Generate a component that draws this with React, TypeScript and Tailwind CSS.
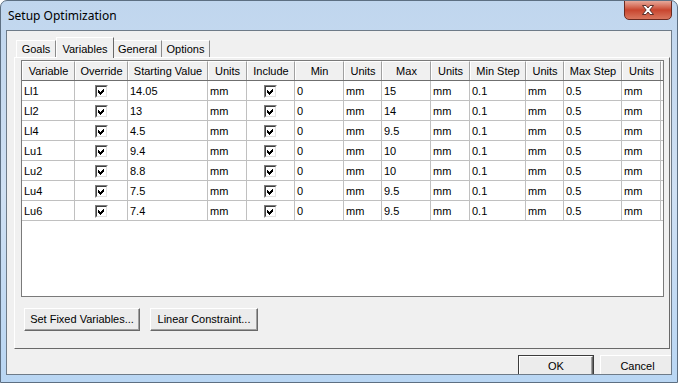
import React from "react";

const cols = [
  { h: "Variable", w: "w-[53px]" },
  { h: "Override", w: "w-[53px]" },
  { h: "Starting Value", w: "w-[80px]" },
  { h: "Units", w: "w-[39px]" },
  { h: "Include", w: "w-[48px]" },
  { h: "Min", w: "w-[49px]" },
  { h: "Units", w: "w-[38px]" },
  { h: "Max", w: "w-[49px]" },
  { h: "Units", w: "w-[39px]" },
  { h: "Min Step", w: "w-[56px]" },
  { h: "Units", w: "w-[38px]" },
  { h: "Max Step", w: "w-[58px]" },
  { h: "Units", w: "w-[39px]" },
];

const rows = [
  ["Ll1", "14.05", "15"],
  ["Ll2", "13", "14"],
  ["Ll4", "4.5", "9.5"],
  ["Lu1", "9.4", "10"],
  ["Lu2", "8.8", "10"],
  ["Lu4", "7.5", "9.5"],
  ["Lu6", "7.4", "9.5"],
];

function Check() {
  return (
    <div className="w-[13px] h-[13px] border border-t-[#808080] border-l-[#808080] border-b-white border-r-white">
      <div className="w-[11px] h-[11px] border border-t-[#404040] border-l-[#404040] border-b-[#e3e3e3] border-r-[#e3e3e3] bg-white flex items-center justify-center">
        <svg width="9" height="9" viewBox="0 0 9 9" shapeRendering="crispEdges">
          <path d="M1 3 L3 5 L7 1 L7 4 L3 8 L1 6 Z" fill="#000" />
        </svg>
      </div>
    </div>
  );
}

function Btn({ children, w, def }: { children: React.ReactNode; w: string; def?: boolean }) {
  return (
    <div className={`${w} h-[23px] ${def ? "border border-[#3c3c3c]" : ""} shrink-0`}>
      <div className="w-full h-full bg-[#ececec] border border-t-white border-l-white border-b-[#696969] border-r-[#696969] shadow-[inset_-1px_-1px_0_#a0a0a0] flex items-center justify-center text-[11px] text-black">
        {children}
      </div>
    </div>
  );
}

export default function App() {
  return (
    <div
      className="w-[678px] h-[383px] flex flex-col rounded-t-[7px] border border-[#5d6f82] bg-gradient-to-b from-[#c0d6ee] via-[#cfe0f3] to-[#b9d6f3] overflow-hidden"
      style={{ fontFamily: '"Liberation Sans", Arial, sans-serif' }}
    >
      {/* Title bar */}
      <div className="h-[29px] shrink-0 flex items-start relative">
        <div
          className="pl-[7px] pt-[6px] text-[12px] text-black"
          style={{ fontFamily: '"Noto Sans", sans-serif' }}
        >
          Setup Optimization
        </div>
        <div className="absolute right-[5px] top-[-1px] w-[48px] h-[20px] rounded-b-[5px] border border-[#6b2a20] bg-gradient-to-b from-[#e6a89a] via-[#c8452e] to-[#d9765e] flex items-center justify-center">
          <svg width="14" height="12" viewBox="0 0 14 12">
            <path
              d="M1.5 1.5 L5 1.5 L7 4 L9 1.5 L12.5 1.5 L8.8 6 L12.5 10.5 L9 10.5 L7 8 L5 10.5 L1.5 10.5 L5.2 6 Z"
              fill="#fff"
              stroke="#4a2420"
              strokeWidth="0.9"
              strokeLinejoin="round"
            />
          </svg>
        </div>
      </div>

      {/* Client */}
      <div className="flex-1 px-[5px] flex min-h-0">
        <div className="flex-1 border border-[#6e7b88] bg-[#f0f0f0] overflow-hidden pl-[7px] pt-[6px]">
          {/* Tabs */}
          <div className="h-[20px] flex items-end pl-[2px] relative z-10 text-[11px] text-black">
            <div className="w-[40px] h-[17px] bg-[#f0f0f0] border-l border-t border-l-white border-t-white border-r border-r-[#8a8a8a] flex items-center justify-center pt-[1px]">
              Goals
            </div>
            <div className="w-[58px] h-[21px] mb-[-1px] bg-[#f0f0f0] border-l border-t border-l-white border-t-white border-r border-r-[#696969] flex items-start justify-center pt-[3px]">
              Variables
            </div>
            <div className="w-[48px] h-[17px] bg-[#f0f0f0] border-t border-t-white border-r border-r-[#8a8a8a] flex items-center justify-center pt-[1px]">
              General
            </div>
            <div className="w-[48px] h-[17px] bg-[#f0f0f0] border-t border-t-white border-r border-r-[#8a8a8a] flex items-center justify-center pt-[1px]">
              Options
            </div>
          </div>

          {/* Panel */}
          <div className="w-[656px] h-[292px] border border-t-white border-l-white border-b-[#696969] border-r-[#696969] pl-[6px] pt-[2px] flex flex-col">
            {/* Grid */}
            <div className="w-[643px] h-[237px] border border-[#7a7a7a] bg-white flex flex-col text-[11px] text-black">
              <div className="flex h-[20px] shrink-0 border-b border-b-[#6f6f6f]">
                {cols.map((c, i) => (
                  <div
                    key={i}
                    className={`${c.w} shrink-0 bg-[#f0f0f0] border-t border-l border-t-white border-l-white border-r border-r-[#a0a0a0] flex items-center justify-center`}
                  >
                    {c.h}
                  </div>
                ))}
                <div className="flex-1 bg-[#f0f0f0] border-t border-l border-t-white border-l-white" />
              </div>
              {rows.map((r, ri) => {
                const vals: (string | "chk")[] = [
                  r[0], "chk", r[1], "mm", "chk", "0", "mm", r[2], "mm", "0.1", "mm", "0.5", "mm",
                ];
                return (
                  <div key={ri} className="flex h-[20px] shrink-0 border-b border-b-[#c0c0c0]">
                    {cols.map((c, i) => (
                      <div
                        key={i}
                        className={`${c.w} shrink-0 border-r border-r-[#c0c0c0] flex items-center pt-[1px] ${vals[i] === "chk" ? "justify-center" : "pl-[2px]"}`}
                      >
                        {vals[i] === "chk" ? <Check /> : vals[i]}
                      </div>
                    ))}
                    <div className="flex-1" />
                  </div>
                );
              })}
            </div>

            {/* Buttons */}
            <div className="flex gap-[10px] pl-[3px] mt-[11px]">
              <Btn w="w-[116px]">Set Fixed Variables...</Btn>
              <Btn w="w-[108px]">Linear Constraint...</Btn>
            </div>
          </div>

          {/* Bottom buttons */}
          <div className="flex justify-end gap-[6px] mt-[6px] mr-[-4px]">
            <Btn w="w-[76px]" def>
              OK
            </Btn>
            <Btn w="w-[75px]">Cancel</Btn>
          </div>
        </div>
      </div>
      <div className="h-[7px] shrink-0" />
    </div>
  );
}
